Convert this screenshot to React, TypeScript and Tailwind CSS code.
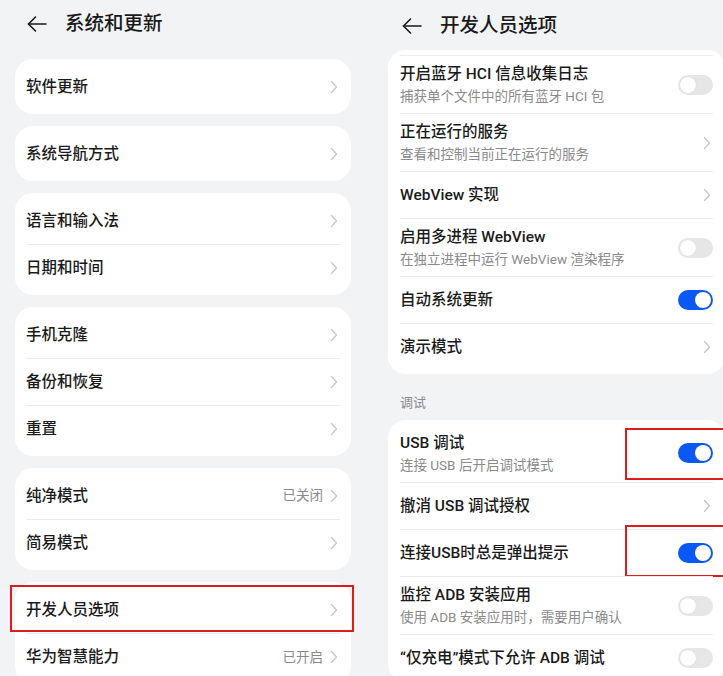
// Two HarmonyOS settings screens side by side: "系统和更新" and "开发人员选项".

type Trail = "chevron" | "on" | "off";

interface Row {
    title: string;
    sub?: string;
    value?: string;
    trail: Trail;
    marked?: "left" | "right-low" | "right-high";
}

const FONT = "font-['Roboto','Noto_Sans_CJK_SC',sans-serif]";

const LEFT_CARDS: Row[][] = [
    [{ title: "软件更新", trail: "chevron" }],
    [{ title: "系统导航方式", trail: "chevron" }],
    [
        { title: "语言和输入法", trail: "chevron" },
        { title: "日期和时间", trail: "chevron" },
    ],
    [
        { title: "手机克隆", trail: "chevron" },
        { title: "备份和恢复", trail: "chevron" },
        { title: "重置", trail: "chevron" },
    ],
    [
        { title: "纯净模式", value: "已关闭", trail: "chevron" },
        { title: "简易模式", trail: "chevron" },
    ],
    [
        { title: "开发人员选项", trail: "chevron", marked: "left" },
        { title: "华为智慧能力", value: "已开启", trail: "chevron" },
    ],
];

const DEV_TOP: Row[] = [
    { title: "开启蓝牙 HCI 信息收集日志", sub: "捕获单个文件中的所有蓝牙 HCI 包", trail: "off" },
    { title: "正在运行的服务", sub: "查看和控制当前正在运行的服务", trail: "chevron" },
    { title: "WebView 实现", trail: "chevron" },
    { title: "启用多进程 WebView", sub: "在独立进程中运行 WebView 渲染程序", trail: "off" },
    { title: "自动系统更新", trail: "on" },
    { title: "演示模式", trail: "chevron" },
];

const DEV_DEBUG: Row[] = [
    { title: "USB 调试", sub: "连接 USB 后开启调试模式", trail: "on", marked: "right-low" },
    { title: "撤消 USB 调试授权", trail: "chevron" },
    { title: "连接USB时总是弹出提示", trail: "on", marked: "right-high" },
    { title: "监控 ADB 安装应用", sub: "使用 ADB 安装应用时，需要用户确认", trail: "off" },
    { title: "“仅充电”模式下允许 ADB 调试", trail: "off" },
];

function BackArrow() {
    return (
        <svg width="20" height="16" viewBox="0 0 20 16" fill="none" stroke="#1a1a1a" strokeWidth="1.6" strokeLinecap="round" strokeLinejoin="round">
            <path d="M19 8H1.5" />
            <path d="M8.5 1L1.5 8l7 7" />
        </svg>
    );
}

function Chevron() {
    return (
        <svg width="8" height="14" viewBox="0 0 8 14" fill="none" stroke="#c6c6c6" strokeWidth="1.3" strokeLinecap="round" strokeLinejoin="round">
            <path d="M1.5 1.5L6.5 7l-5 5.5" />
        </svg>
    );
}

function Toggle({ on }: { on: boolean }) {
    return (
        <div className={`w-[35px] h-[20px] rounded-full p-[2px] flex ${on ? "bg-[#0a59f7] justify-end" : "bg-[#e6e6e6] justify-start"}`}>
            <div className="w-[16px] h-[16px] rounded-full bg-white shadow-[0_0_1px_rgba(0,0,0,0.15)]" />
        </div>
    );
}

// Red annotation frames drawn over the screenshot
function Mark({ kind }: { kind: NonNullable<Row["marked"]> }) {
    const pos =
        kind === "left"
            ? "left-[-5px] right-[-3px] top-[-1px] bottom-[1px]"
            : kind === "right-low"
              ? "left-[237px] right-[-10px] top-[4px] bottom-[2px]"
              : "left-[237px] right-[-10px] top-[-4px] bottom-[-1px]";
    return <div aria-hidden="true" className={`absolute border-2 border-[#dc1c1c] pointer-events-none ${pos}`} />;
}

function SettingRow({ row, divider, pad }: { row: Row; divider: boolean; pad: string }) {
    const tall = !!row.sub;
    return (
        <div className={`relative ${pad}`}>
            <div className={`flex items-center ${tall ? "h-[58px]" : "h-[47px]"} ${divider ? "border-t border-[#ebebeb]" : ""}`}>
                <div className="flex-1 min-w-0 flex flex-col">
                    <span className="text-[15.5px] leading-[20px] font-medium text-[#1a1a1a] whitespace-nowrap">{row.title}</span>
                    {row.sub && (
                        <span className="mt-[3px] text-[13.5px] leading-[18px] text-[#8a8a8a] whitespace-nowrap">{row.sub}</span>
                    )}
                </div>
                {row.value && <span className="mr-[7px] text-[13.5px] text-[#8a8a8a]">{row.value}</span>}
                {row.trail === "chevron" ? (
                    <span className="mr-[2px] flex"><Chevron /></span>
                ) : (
                    <Toggle on={row.trail === "on"} />
                )}
            </div>
            {row.marked && <Mark kind={row.marked} />}
        </div>
    );
}

function Header({ title, className }: { title: string; className: string }) {
    return (
        <div className={`shrink-0 flex items-center ${className}`}>
            <BackArrow />
            <span className="ml-[18px] text-[19.5px] font-medium text-[#1a1a1a]">{title}</span>
        </div>
    );
}

export default function App() {
    return (
        <div className={`w-[723px] h-[676px] overflow-hidden bg-[#f1f3f5] flex items-start ${FONT}`}>
            {/* ── Left: 系统和更新 ─────────────────────────────── */}
            <div className="w-[365px] shrink-0 flex flex-col">
                <Header title="系统和更新" className="h-[59px] pl-[27px] pb-[11px]" />
                <div className="flex flex-col gap-[12px] pl-[15px] pr-[14px]">
                    {LEFT_CARDS.map((card, i) => (
                        <div key={i} className="shrink-0 bg-white rounded-[18px] py-[4px]">
                            {card.map((row, j) => (
                                <SettingRow key={row.title} row={row} divider={j > 0} pad="px-[11px]" />
                            ))}
                        </div>
                    ))}
                </div>
            </div>

            {/* ── Right: 开发人员选项 ─────────────────────────── */}
            <div className="w-[360px] shrink-0 flex flex-col">
                <Header title="开发人员选项" className="h-[50px] pl-[37px] pt-[2px]" />
                <div className="shrink-0 ml-[23px] w-[337px] bg-white rounded-[18px] pt-[5px] pb-[4px]">
                    {DEV_TOP.map((row) => (
                        <SettingRow key={row.title} row={row} divider pad="px-[12px]" />
                    ))}
                </div>
                <div className="shrink-0 pl-[35px] pt-[20px] pb-[8px] text-[13px] leading-[18px] text-[#8a8a8a]">调试</div>
                <div className="shrink-0 ml-[23px] w-[337px] bg-white rounded-[18px] pt-[4px]">
                    {DEV_DEBUG.map((row, j) => (
                        <SettingRow key={row.title} row={row} divider={j > 0} pad="px-[12px]" />
                    ))}
                </div>
            </div>
        </div>
    );
}
